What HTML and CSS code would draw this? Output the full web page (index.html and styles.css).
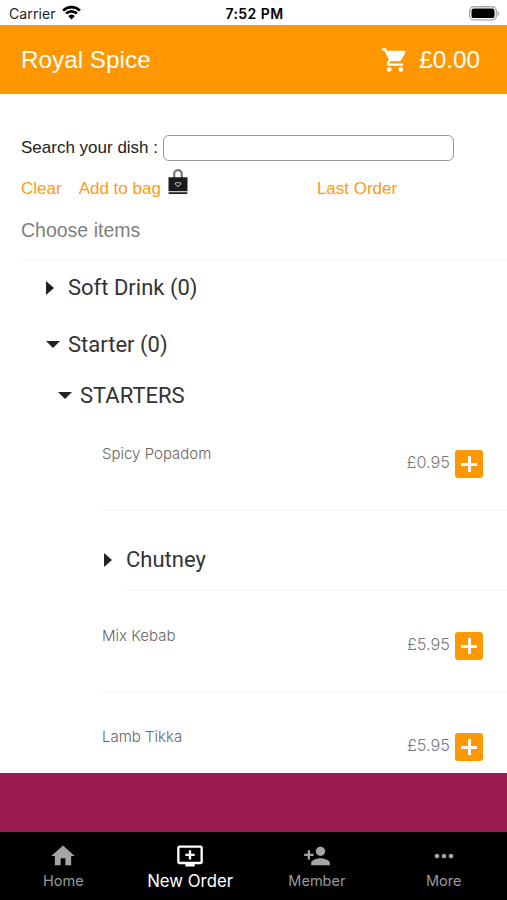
FILE: index.html
```html
<!DOCTYPE html>
<html lang="en">
<head>
<meta charset="utf-8">
<title>Royal Spice</title>
<link rel="stylesheet" href="styles.css">
</head>
<body>
<div class="status">
  <div class="carrier"><span>Carrier</span>
    <svg class="wifi" viewBox="0 0 18 14"><path d="M1 5.2a11.4 11.4 0 0 1 16 0M3.9 8a7.3 7.3 0 0 1 10.2 0" fill="none" stroke="#000" stroke-width="2.5"/><path d="M5.8 10.3a4.7 4.7 0 0 1 6.4 0L9 13.6z"/></svg>
  </div>
  <div class="clock">7:52 PM</div>
  <svg class="battery" viewBox="0 0 31 15"><rect x=".7" y=".7" width="26.6" height="13.2" rx="4" fill="#fff" stroke="#aaa" stroke-width="1.4"/><rect x="2.5" y="2.5" width="23" height="9.6" rx="2.2"/><path d="M28.5 5c2.4 1 2.4 4 0 5z" fill="#aaa"/></svg>
</div>
<header class="header">
  <h1>Royal Spice</h1>
  <svg class="cart" viewBox="0 0 24 24"><path d="M7 18c-1.1 0-1.99.9-1.99 2S5.9 22 7 22s2-.9 2-2-.9-2-2-2zM1 2v2h2l3.6 7.59-1.35 2.45c-.16.28-.25.61-.25.96 0 1.1.9 2 2 2h12v-2H7.42c-.14 0-.25-.11-.25-.25l.03-.12.9-1.63h7.45c.75 0 1.41-.41 1.75-1.03l3.58-6.49A1 1 0 0 0 20 4H5.21l-.94-2zM17 18c-1.1 0-1.99.9-1.99 2s.89 2 1.99 2 2-.9 2-2-.9-2-2-2z" fill="#fff"/></svg>
  <span class="total">£0.00</span>
</header>
<main class="main">
  <div class="search"><label for="dish">Search your dish :</label><input id="dish" type="text"></div>
  <div class="actions">
    <a class="clear">Clear</a><a class="add">Add to bag</a>
    <svg class="bag" viewBox="0 0 20 26"><path d="M6.2 9V5a3.8 3.8 0 0 1 7.6 0v4" fill="none" stroke="#777" stroke-width="2.2"/><path d="M.5 8.2h19v14H.5zM.5 23.2h19v.8q0 1-1 1h-17q-1 0-1-1z" fill="#1c1c20"/><path d="M10 17.6l-2.7-2.3q-.6-1.700 1-1.800 1.100 0 1.700.8.6-.8 1.700-.8 1.600.1 1 1.800z" fill="none" stroke="#ccc" stroke-width="1"/></svg>
    <a class="last">Last Order</a>
  </div>
  <h2 class="choose">Choose items</h2>
  <div class="group soft"><i class="closed"></i><span>Soft Drink (0)</span></div>
  <div class="group starter"><i class="open"></i><span>Starter (0)</span></div>
  <div class="group starters"><i class="open"></i><span>STARTERS</span></div>
  <div class="item first"><span class="name popadom">Spicy Popadom</span><span class="price">£0.95</span><button class="plus"></button></div>
  <div class="group chutney"><i class="closed"></i><span>Chutney</span></div>
  <div class="item"><span class="name">Mix Kebab</span><span class="price">£5.95</span><button class="plus"></button></div>
  <div class="item"><span class="name">Lamb Tikka</span><span class="price">£5.95</span><button class="plus"></button></div>
</main>
<div class="band"></div>
<nav class="tabs">
  <a class="tab"><svg viewBox="0 0 24 24"><path d="M10 20v-6h4v6h5v-8h3L12 3 2 12h3v8z"/></svg><span>Home</span></a>
  <a class="tab active"><svg viewBox="0 0 24 24"><path d="M21 3H3c-1.11 0-2 .89-2 2v12a2 2 0 0 0 2 2h5v2h8v-2h5c1.1 0 1.99-.9 1.99-2L23 5a2 2 0 0 0-2-2zm0 14H3V5h18zm-5-7v2h-3v3h-2v-3H8v-2h3V7h2v3z"/></svg><span>New Order</span></a>
  <a class="tab"><svg viewBox="0 0 24 24"><path d="M15 12c2.21 0 4-1.79 4-4s-1.79-4-4-4-4 1.790-4 4 1.790 4 4 4zm-9-2V7H4v3H1v2h3v3h2v-3h3v-2zm9 4c-2.670 0-8 1.340-8 4v2h16v-2c0-2.660-5.330-4-8-4z"/></svg><span>Member</span></a>
  <a class="tab"><svg viewBox="0 0 24 24"><path d="M6 10c-1.100 0-2 .9-2 2s.9 2 2 2 2-.9 2-2-.9-2-2-2zm12 0c-1.100 0-2 .9-2 2s.9 2 2 2 2-.9 2-2-.9-2-2-2zm-6 0c-1.100 0-2 .9-2 2s.9 2 2 2 2-.9 2-2-.9-2-2-2z"/></svg><span>More</span></a>
</nav>
</body>
</html>
```
FILE: styles.css
```css
* { box-sizing: border-box; }
body {
  margin: 0;
  height: 900px;
  overflow: hidden;
  display: flex;
  flex-direction: column;
  background: #fff;
  font-family: "Liberation Sans", Arial, sans-serif;
}
h1, h2 { margin: 0; font-weight: 400; }
svg { display: block; flex: none; }

.status {
  height: 25px;
  flex: none;
  display: grid;
  grid-template-columns: 1fr auto 1fr;
  align-items: center;
  padding: 2px 7px 0 9px;
  font-family: Inter, sans-serif;
  font-size: 14px;
}
.carrier { display: flex; align-items: center; gap: 6px; letter-spacing: .1px; color: #222; }
.wifi { width: 19px; height: 15px; margin-top: -2px; }
.clock { font-weight: 600; font-size: 14px; letter-spacing: .45px; }
.battery { width: 31px; height: 15px; justify-self: end; margin-top: -1px; }

.header {
  height: 69px;
  flex: none;
  display: flex;
  align-items: center;
  padding: 0 27px 0 21px;
  background: #ff9800;
  color: #fff;
}
.header h1 { font-size: 24.3px; }
.cart { width: 28px; height: 28px; margin-left: auto; }
.total { margin-left: 10px; font-size: 24.3px; }

.main { height: 679px; flex: none; overflow: hidden; padding-top: 41px; }
.search { display: flex; align-items: center; height: 26px; padding-left: 21px; font-size: 17px; color: #222; }
.search label { width: 142px; white-space: nowrap; margin-top: -1px; }
.search input { width: 291px; height: 26px; border: 1.5px solid #999; border-radius: 6px; background: #fff; padding: 0 6px; }
.actions { display: flex; align-items: center; height: 40px; margin-top: 8px; padding-left: 21px; font-size: 17px; color: #ff9a16; }
.add { margin-left: 17px; }
.bag { width: 20px; height: 26px; margin: -14px 0 0 7px; }
.last { margin-left: 129px; }
.choose { height: 51px; padding: 10px 0 0 21px; font-size: 19.5px; line-height: 22px; color: #808080; }
.choose + .group { border-top: 1px solid #f3f3f3; }

.group { display: flex; align-items: center; font: 400 22px Roboto, sans-serif; color: #333; }
.group i { width: 0; height: 0; flex: none; border: 7px solid transparent; }
.group .closed { border-left-color: #222; border-right: 0; border-left-width: 8px; }
.group .open { border-top-color: #222; border-bottom: 0; }
.soft { height: 56px; margin-left: 21px; padding: 0 0 2px 25px; }
.soft span { margin-left: 14px; }
.starter { height: 56px; padding-left: 46px; }
.starter span { margin-left: 8px; }
.starters { height: 47px; padding: 0 0 1px 58px; }
.starters span { margin-left: 8px; }

.item { display: flex; height: 101px; margin-left: 102px; padding-right: 24px; border-bottom: 1px solid #f3f3f3; color: #666; }
.item.first { height: 92px; }
.name { margin-top: 35px; font: 300 15px/20px Inter, sans-serif; }
.price { margin: 43px 5px 0 auto; font: 300 16.3px/20px Inter, sans-serif; color: #777; }
.plus {
  width: 28px; height: 28px; margin: 41px 0 0; padding: 0; border: 0; border-radius: 3px;
  background: linear-gradient(#fff, #fff) center / 16px 3px no-repeat, linear-gradient(#fff, #fff) center / 3px 16px no-repeat, #ff9800;
}
.first .name { margin-top: 25px; }
.first .price { margin-top: 33px; }
.first .plus { margin-top: 31px; }
.chutney { height: 80px; margin-left: 126px; padding-top: 18px; border-bottom: 1px solid #f3f3f3; }
.chutney i { margin-left: -22px; }
.chutney span { margin-left: 14px; }

.band { height: 59px; flex: none; background: #9c1b53; }
.tabs { height: 69px; flex: none; display: grid; grid-template-columns: repeat(4, 1fr); background: #000; }
.tab { display: flex; flex-direction: column; align-items: center; padding-top: 10px; color: #999; font: 400 14.5px/18px Inter, sans-serif; }
.tab svg { width: 28px; height: 28px; fill: #a5a5a5; }
.tab span { margin-top: 2px; }
.active { color: #fff; font-size: 16.8px; }
.active svg { fill: #fff; }
```
